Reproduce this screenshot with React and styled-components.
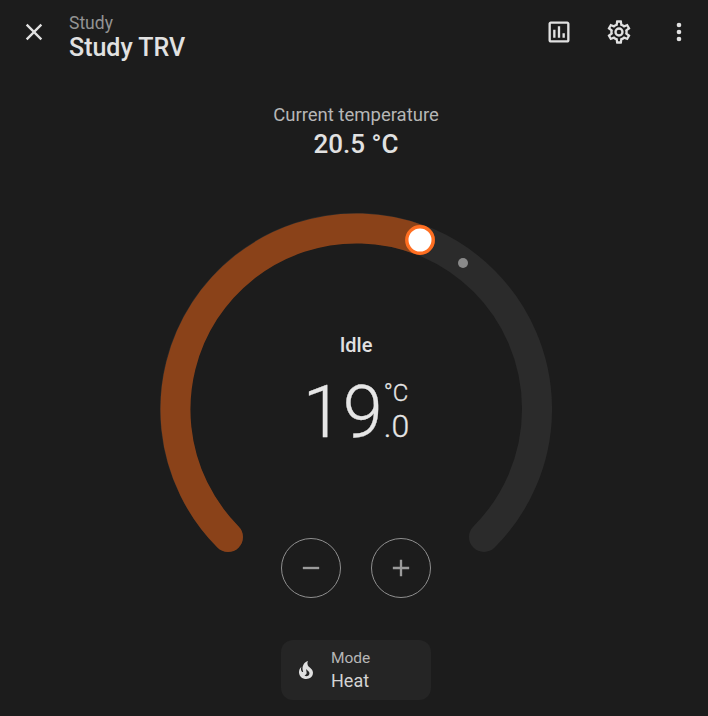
import React from 'react'
import styled, { createGlobalStyle } from 'styled-components'

const GlobalStyle = createGlobalStyle`
  html, body {
    margin: 0;
    background: #1c1c1c;
  }
  body {
    font-family: Roboto, "Noto Sans", sans-serif;
    color: #e1e1e1;
    overflow: hidden;
  }
`

const mdi = {
  close: 'M19,6.41L17.59,5L12,10.59L6.41,5L5,6.41L10.59,12L5,17.59L6.41,19L12,13.41L17.59,19L19,17.59L13.41,12L19,6.41Z',
  chart: 'M9 17H7V10H9V17M13 17H11V7H13V17M17 17H15V13H17V17M19 19H5V5H19V19.1M19 3H5C3.9 3 3 3.9 3 5V19C3 20.1 3.9 21 5 21H19C20.1 21 21 20.1 21 19V5C21 3.9 20.1 3 19 3Z',
  cog: 'M12,8A4,4 0 0,1 16,12A4,4 0 0,1 12,16A4,4 0 0,1 8,12A4,4 0 0,1 12,8M12,10A2,2 0 0,0 10,12A2,2 0 0,0 12,14A2,2 0 0,0 14,12A2,2 0 0,0 12,10M10,22C9.75,22 9.54,21.82 9.5,21.58L9.13,18.93C8.5,18.68 7.96,18.34 7.44,17.94L4.95,18.95C4.73,19.03 4.46,18.95 4.34,18.73L2.34,15.27C2.21,15.05 2.27,14.78 2.46,14.63L4.57,12.97L4.5,12L4.57,11L2.46,9.37C2.27,9.22 2.21,8.95 2.34,8.73L4.34,5.27C4.46,5.05 4.73,4.96 4.95,5.05L7.44,6.05C7.96,5.66 8.5,5.32 9.13,5.07L9.5,2.42C9.54,2.18 9.75,2 10,2H14C14.25,2 14.46,2.18 14.5,2.42L14.87,5.07C15.5,5.32 16.04,5.66 16.56,6.05L19.05,5.05C19.27,4.96 19.54,5.05 19.66,5.27L21.66,8.73C21.79,8.95 21.73,9.22 21.54,9.37L19.43,11L19.5,12L19.43,13L21.54,14.63C21.73,14.78 21.79,15.05 21.66,15.27L19.66,18.73C19.54,18.95 19.27,19.04 19.05,18.95L16.56,17.95C16.04,18.34 15.5,18.68 14.87,18.93L14.5,21.58C14.46,21.82 14.25,22 14,22H10M11.25,4L10.88,6.61C9.68,6.86 8.62,7.5 7.85,8.39L5.44,7.35L4.69,8.65L6.8,10.2C6.4,11.37 6.4,12.64 6.8,13.8L4.68,15.36L5.43,16.66L7.86,15.62C8.63,16.5 9.68,17.14 10.87,17.38L11.24,20H12.76L13.13,17.39C14.32,17.14 15.37,16.5 16.14,15.62L18.57,16.66L19.32,15.36L17.2,13.81C17.6,12.64 17.6,11.37 17.2,10.2L19.31,8.65L18.56,7.35L16.15,8.39C15.38,7.5 14.32,6.86 13.12,6.62L12.75,4H11.25Z',
  dots: 'M12,16A2,2 0 0,1 14,18A2,2 0 0,1 12,20A2,2 0 0,1 10,18A2,2 0 0,1 12,16M12,10A2,2 0 0,1 14,12A2,2 0 0,1 12,14A2,2 0 0,1 10,12A2,2 0 0,1 12,10M12,4A2,2 0 0,1 14,6A2,2 0 0,1 12,8A2,2 0 0,1 10,6A2,2 0 0,1 12,4Z',
  minus: 'M19,13H5V11H19V13Z',
  plus: 'M19,13H13V19H11V13H5V11H11V5H13V11H19V13Z',
  fire: 'M17.66 11.2C17.43 10.9 17.15 10.64 16.89 10.38C16.22 9.78 15.46 9.35 14.82 8.72C13.33 7.26 13 4.85 13.95 3C13 3.23 12.17 3.75 11.46 4.32C8.87 6.4 7.85 10.07 9.07 13.22C9.11 13.32 9.15 13.42 9.15 13.55C9.15 13.77 9 13.97 8.8 14.05C8.57 14.15 8.33 14.09 8.14 13.93C8.08 13.88 8.04 13.83 8 13.76C6.87 12.33 6.69 10.28 7.45 8.64C5.78 10 4.87 12.3 5 14.47C5.06 14.97 5.12 15.47 5.29 15.97C5.43 16.57 5.7 17.17 6 17.7C7.08 19.43 8.95 20.67 10.96 20.92C13.1 21.19 15.39 20.8 17.03 19.32C18.86 17.66 19.5 15 18.56 12.72L18.43 12.46C18.28 12.13 17.66 11.2 17.66 11.2M14.5 17.5C14.22 17.74 13.76 18 13.4 18.1C12.28 18.5 11.16 17.94 10.5 17.28C11.69 17 12.4 16.12 12.61 15.23C12.78 14.43 12.46 13.77 12.33 13C12.21 12.26 12.23 11.63 12.5 10.94C12.69 11.32 12.89 11.7 13.13 12C13.9 13 15.11 13.44 15.37 14.8C15.41 14.94 15.43 15.08 15.43 15.23C15.46 16.05 15.1 16.95 14.5 17.5H14.5Z',
}

const Icon = ({ path, size = 28 }) => (
  <svg width={size} height={size} viewBox="0 0 24 24" fill="currentColor">
    <path d={path} />
  </svg>
)

const Page = styled.main`
  width: 708px;
  height: 716px;
  overflow: hidden;
  display: flex;
  flex-direction: column;
`

const Header = styled.header`
  height: 64px;
  display: flex;
  align-items: center;
  padding: 0 5px 0 10px;
`

const IconButton = styled.div`
  width: 48px;
  height: 48px;
  display: flex;
  align-items: center;
  justify-content: center;
  color: #e1e1e1;
`

const Titles = styled.div`
  flex: 1;
  margin-left: 11px;
  padding-top: 12px;
  display: flex;
  flex-direction: column;
`

const Subtitle = styled.div`
  font-size: 17.5px;
  line-height: 19px;
  color: #939393;
`

const Title = styled.div`
  font-size: 25px;
  line-height: 30px;
  font-weight: 500;
  color: #e1e1e1;
`

const Actions = styled.div`
  display: flex;
  gap: 12px;
`

const Content = styled.div`
  padding-left: 4px;
  display: flex;
  flex-direction: column;
  align-items: center;
`

const Current = styled.div`
  margin-top: 39px;
  text-align: center;
`

const CurrentLabel = styled.div`
  font-size: 18.5px;
  line-height: 24px;
  color: #b6b6b6;
`

const CurrentValue = styled.div`
  font-size: 26px;
  line-height: 34px;
  font-weight: 500;
  color: #e1e1e1;
`

const Dial = styled.div`
  margin-top: 52px;
  width: 392px;
  height: 385px;
  display: grid;
  justify-items: center;
  > * {
    grid-area: 1 / 1;
  }
`

const DialArt = styled.svg`
  width: 392px;
  height: 385px;
`

const Readout = styled.div`
  padding-top: 120px;
  display: flex;
  flex-direction: column;
  align-items: center;
`

const Status = styled.div`
  font-size: 20px;
  line-height: 24px;
  font-weight: 500;
  color: #e1e1e1;
`

const Temperature = styled.div`
  margin-top: 20px;
  display: flex;
  color: #e6e6e6;
  -webkit-text-stroke: 0.3px #e6e6e6;
`

const Whole = styled.span`
  font-size: 72px;
  line-height: 72px;
  font-weight: 300;
`

const Side = styled.span`
  display: flex;
  flex-direction: column;
  margin-left: 1px;
  padding-top: 1px;
`

const Unit = styled.span`
  font-size: 24px;
  line-height: 30px;
  font-weight: 300;
`

const Decimal = styled.span`
  font-size: 32px;
  line-height: 36px;
  font-weight: 300;
`

const Controls = styled.div`
  align-self: end;
  display: flex;
  gap: 30px;
`

const RoundButton = styled.div`
  width: 60px;
  height: 60px;
  box-sizing: border-box;
  border: 1px solid #8f8f8f;
  border-radius: 50%;
  display: flex;
  align-items: center;
  justify-content: center;
  color: #9b9b9b;
`

const ModeCard = styled.div`
  margin-top: 42px;
  width: 150px;
  height: 60px;
  box-sizing: border-box;
  padding-left: 13px;
  background: #252525;
  border-radius: 12px;
  display: flex;
  align-items: center;
  gap: 13px;
`

const ModeIcon = styled.div`
  display: flex;
  color: #e1e1e1;
`

const ModeText = styled.div`
  display: flex;
  flex-direction: column;
  padding-top: 2px;
`

const ModeLabel = styled.div`
  font-size: 15.5px;
  line-height: 20px;
  color: #b6b6b6;
`

const ModeValue = styled.div`
  font-size: 18px;
  line-height: 26px;
  color: #d4d4d4;
`

const TrackPath = styled.path`
  fill: none;
  stroke-width: 30;
  stroke-linecap: round;
  stroke: ${(p) => p.$color};
`

// dial centre is 196,196 and the arc radius 181, 270deg sweep
const FULL_ARC = 'M 68 324 A 181 181 0 1 1 324 324'
const ACTIVE_ARC = 'M 68 324 A 181 181 0 0 1 260 27'

const App = () => (
  <Page>
    <GlobalStyle />
    <Header>
      <IconButton><Icon path={mdi.close} /></IconButton>
      <Titles>
        <Subtitle>Study</Subtitle>
        <Title>Study TRV</Title>
      </Titles>
      <Actions>
        <IconButton><Icon path={mdi.chart} /></IconButton>
        <IconButton><Icon path={mdi.cog} /></IconButton>
        <IconButton><Icon path={mdi.dots} /></IconButton>
      </Actions>
    </Header>
    <Content>
      <Current>
        <CurrentLabel>Current temperature</CurrentLabel>
        <CurrentValue>20.5 °C</CurrentValue>
      </Current>
      <Dial>
        <DialArt viewBox="0 0 392 385">
          <TrackPath d={FULL_ARC} $color="#2b2b2b" />
          <TrackPath d={ACTIVE_ARC} $color="#8a4219" />
          <circle cx="303" cy="50" r="5" fill="#8a8a8a" />
          <circle cx="260" cy="27" r="13.2" fill="#fff" stroke="#ff6f22" strokeWidth="3.4" />
        </DialArt>
        <Readout>
          <Status>Idle</Status>
          <Temperature>
            <Whole>19</Whole>
            <Side>
              <Unit>°C</Unit>
              <Decimal>.0</Decimal>
            </Side>
          </Temperature>
        </Readout>
        <Controls>
          <RoundButton><Icon path={mdi.minus} /></RoundButton>
          <RoundButton><Icon path={mdi.plus} /></RoundButton>
        </Controls>
      </Dial>
      <ModeCard>
        <ModeIcon><Icon path={mdi.fire} size={24} /></ModeIcon>
        <ModeText>
          <ModeLabel>Mode</ModeLabel>
          <ModeValue>Heat</ModeValue>
        </ModeText>
      </ModeCard>
    </Content>
  </Page>
)

export default App
